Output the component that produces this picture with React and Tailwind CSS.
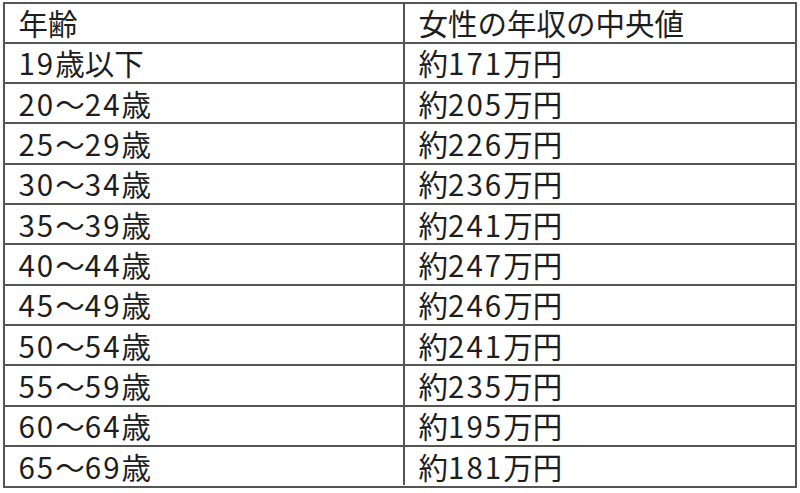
import React from "react";

const rows = [
  ["年齢", "女性の年収の中央値"],
  ["19歳以下", "約171万円"],
  ["20～24歳", "約205万円"],
  ["25～29歳", "約226万円"],
  ["30～34歳", "約236万円"],
  ["35～39歳", "約241万円"],
  ["40～44歳", "約247万円"],
  ["45～49歳", "約246万円"],
  ["50～54歳", "約241万円"],
  ["55～59歳", "約235万円"],
  ["60～64歳", "約195万円"],
  ["65～69歳", "約181万円"],
];

function Txt({ s }) {
  const parts = s.split(/(\d+)/);
  return (
    <span>
      {parts.map((p, i) =>
        /^\d+$/.test(p) ? (
          <span key={i} className="tracking-[2px]">
            {p}
          </span>
        ) : (
          <span key={i}>{p}</span>
        )
      )}
    </span>
  );
}

export default function App() {
  return (
    <div className="w-[800px] h-[493px] bg-white overflow-hidden">
      <div
        className="mt-[1.5px] ml-[2.5px] w-[794px] h-[486px] border-2 border-[#555] flex flex-col text-[#1e1e1e] text-[29.5px] leading-none"
        style={{ fontFamily: '"Noto Sans CJK JP", "Noto Sans", sans-serif' }}
      >
        {rows.map((r, i) => (
          <div
            key={i}
            className={`flex-1 flex items-stretch ${i > 0 ? "border-t-2 border-[#555]" : ""}`}
          >
            <div className="w-[400px] border-r-2 border-[#555] flex items-center pl-[14px]">
              <Txt s={r[0]} />
            </div>
            <div className="flex-1 flex items-center pl-[14px]">
              <Txt s={r[1]} />
            </div>
          </div>
        ))}
      </div>
    </div>
  );
}
